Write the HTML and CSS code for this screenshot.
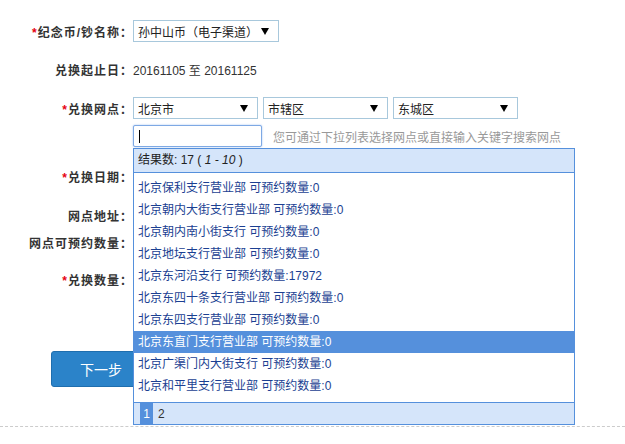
FILE: index.html
```html
<!DOCTYPE html>
<html lang="zh-CN">
<head>
  <meta charset="UTF-8">
  <title>纪念币预约</title>
  <link rel="stylesheet" href="styles.css">
</head>
<body>
  <div class="form">
    <div class="row row-name">
      <label class="label"><span class="req">*</span>纪念币/钞名称：</label>
      <div class="select sel-coin"><span>孙中山币（电子渠道）</span><i class="arrow"></i></div>
    </div>

    <div class="row row-date">
      <label class="label">兑换起止日：</label>
      <span class="value">20161105 至 20161125</span>
    </div>

    <div class="row row-site">
      <label class="label"><span class="req">*</span>兑换网点：</label>
      <div class="select sel-area"><span>北京市</span><i class="arrow"></i></div>
      <div class="select sel-area"><span>市辖区</span><i class="arrow"></i></div>
      <div class="select sel-area"><span>东城区</span><i class="arrow"></i></div>
    </div>

    <div class="row row-search">
      <div class="search-wrap">
        <div class="search-box"><span class="caret"></span></div>
        <span class="hint">您可通过下拉列表选择网点或直接输入关键字搜索网点</span>

        <div class="suggest">
          <div class="suggest-head">结果数: 17 ( <em>1 - 10</em> )</div>
          <ul class="suggest-list">
            <li>北京保利支行营业部 可预约数量:0</li>
            <li>北京朝内大街支行营业部 可预约数量:0</li>
            <li>北京朝内南小街支行 可预约数量:0</li>
            <li>北京地坛支行营业部 可预约数量:0</li>
            <li>北京东河沿支行 可预约数量:17972</li>
            <li>北京东四十条支行营业部 可预约数量:0</li>
            <li>北京东四支行营业部 可预约数量:0</li>
            <li class="active">北京东直门支行营业部 可预约数量:0</li>
            <li>北京广渠门内大街支行 可预约数量:0</li>
            <li>北京和平里支行营业部 可预约数量:0</li>
          </ul>
          <div class="suggest-pager"><span class="page current">1</span><span class="page">2</span></div>
        </div>
      </div>
    </div>

    <div class="row row-day">
      <label class="label"><span class="req">*</span>兑换日期：</label>
    </div>

    <div class="row row-addr">
      <label class="label">网点地址：</label>
    </div>

    <div class="row row-count">
      <label class="label">网点可预约数量：</label>
    </div>

    <div class="row row-num">
      <label class="label"><span class="req">*</span>兑换数量：</label>
    </div>

    <div class="actions">
      <button class="btn-next">下一步</button>
    </div>

    <div class="divider"></div>
  </div>
</body>
</html>
```

FILE: styles.css
```css
body {
  margin: 0;
  font-family: "Liberation Sans", "Noto Sans CJK SC", sans-serif;
  font-size: 12px;
  color: #333;
  background: #fff;
}

.form {
  padding-top: 20px;
}

.row {
  display: flex;
  align-items: center;
  height: 22px;
}

.row-date { margin-top: 16px; }
.row-site { margin-top: 17px; }
.row-search { margin-top: 6px; }
.row-day { margin-top: 18px; }
.row-addr { margin-top: 17px; }
.row-count { margin-top: 5px; }
.row-num { margin-top: 15px; }

.label {
  width: 133px;
  text-align: right;
  font-weight: bold;
  color: #333;
  font-size: 12px;
  letter-spacing: 1px;
  white-space: nowrap;
}

.req {
  color: #e60012;
  font-weight: bold;
}

.value {
  color: #333;
}

.select {
  height: 22px;
  box-sizing: border-box;
  border: 1px solid #a8c8dc;
  background: #fff;
  display: flex;
  align-items: center;
  justify-content: space-between;
  padding: 0 9px 0 4px;
  color: #222;
  font-size: 12px;
  margin-right: 5px;
}

.sel-coin { width: 146px; }
.sel-area { width: 125px; }

.arrow {
  width: 0;
  height: 0;
  border-left: 4px solid transparent;
  border-right: 4px solid transparent;
  border-top: 7px solid #000;
}

.search-wrap {
  position: relative;
  margin-left: 133px;
  display: flex;
  align-items: center;
  height: 22px;
}

.search-box {
  width: 129px;
  height: 22px;
  box-sizing: border-box;
  border: 1px solid #7ea9e4;
  border-radius: 2px;
  box-shadow: 0 0 2px #9bbdf0;
  background: #fff;
  position: relative;
}

.caret {
  position: absolute;
  left: 5px;
  top: 4px;
  width: 1px;
  height: 13px;
  background: #000;
}

.hint {
  margin-left: 11px;
  color: #999;
  white-space: nowrap;
}

.suggest {
  position: absolute;
  left: 0;
  top: 23px;
  width: 442px;
  box-sizing: border-box;
  border: 1px solid #5590dc;
  background: #fff;
  z-index: 10;
}

.suggest-head {
  height: 23px;
  line-height: 23px;
  background: #d5e5fa;
  border-bottom: 1px solid #5590dc;
  padding-left: 4px;
  color: #222;
}

.suggest-head em {
  font-style: italic;
}

.suggest-list {
  list-style: none;
  margin: 0;
  padding: 4px 0 5px;
}

.suggest-list li {
  height: 22px;
  line-height: 22px;
  padding-left: 4px;
  color: #1b3f92;
  white-space: nowrap;
}

.suggest-list li.active {
  background: #5590dc;
  color: #fff;
}

.suggest-pager {
  height: 21px;
  background: #d5e5fa;
  border-top: 1px solid #5590dc;
  display: flex;
  align-items: stretch;
  padding-left: 6px;
}

.page {
  display: flex;
  align-items: center;
  justify-content: center;
  padding: 0 3px;
  color: #333;
}

.page.current {
  background: #5590dc;
  color: #fff;
  width: 13px;
  padding: 0;
  margin-right: 2px;
}

.actions {
  margin-top: 61px;
  padding-left: 51px;
}

.btn-next {
  width: 100px;
  height: 36px;
  border: 1px solid #1f6eae;
  border-radius: 3px;
  background: #2b83c9;
  color: #fff;
  font-family: "Liberation Sans", "Noto Sans CJK SC", sans-serif;
  font-size: 14px;
  cursor: pointer;
}

.divider {
  margin-top: 39px;
  border-top: 1px dashed #ccc;
}
```
